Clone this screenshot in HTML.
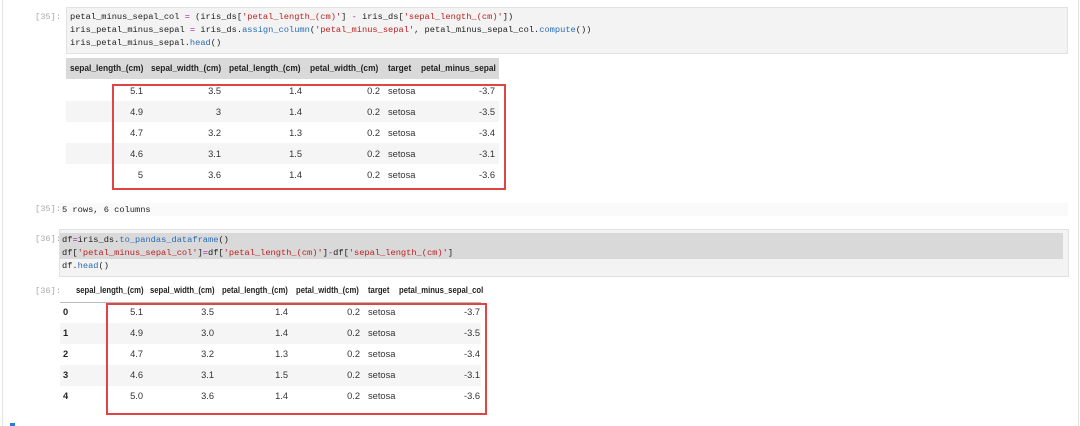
<!DOCTYPE html>
<html><head><style>
body{margin:0;width:1080px;height:426px;background:#fff;position:relative;overflow:hidden;font-family:"Liberation Sans",sans-serif;}
.a{position:absolute;}
.mono{font-family:"Liberation Mono",monospace;font-size:8.7px;color:#222;white-space:pre;line-height:13px;}
.pr{font-family:"Liberation Mono",monospace;font-size:8.7px;color:#aaa;}
.s{color:#b22;} .f{color:#2a6cb5;} .o{color:#a2a;}
.t{font-size:9.3px;color:#333;white-space:nowrap;}
.b{font-size:9.5px;font-weight:bold;color:#222;transform:scaleX(0.88);transform-origin:0 0;}
.b2{transform:scaleX(0.81);}
.ix{font-weight:bold;color:#222;}
</style></head><body>
<div class="a" style="left:2px;top:0;width:1px;height:426px;background:#e4e4e4"></div>
<div class="a" style="left:1078px;top:0;width:1px;height:426px;background:#e4e4e4"></div>

<div class="a pr" style="left:35px;top:12px">[35]:</div>
<div class="a" style="left:66px;top:7px;width:1000px;height:45px;background:#f3f3f3;border:1px solid #e2e2e2"></div>
<div class="a mono" style="left:70px;top:11px">petal_minus_sepal_col <span class="o">=</span> (iris_ds[<span class="s">'petal_length_(cm)'</span>] <span class="o">-</span> iris_ds[<span class="s">'sepal_length_(cm)'</span>])
iris_petal_minus_sepal <span class="o">=</span> iris_ds.<span class="f">assign_column</span>(<span class="s">'petal_minus_sepal'</span>, petal_minus_sepal_col.<span class="f">compute</span>())
iris_petal_minus_sepal.<span class="f">head</span>()</div>

<div class="a" style="left:66px;top:58px;width:433px;height:21px;background:#d9d9d9"></div>
<div class="a" style="left:66px;top:101px;width:433px;height:21px;background:#f5f5f5"></div>
<div class="a" style="left:66px;top:143px;width:433px;height:21px;background:#f5f5f5"></div>
<div class="a t b" style="left:70px;top:63px">sepal_length_(cm)</div>
<div class="a t b" style="left:151px;top:63px">sepal_width_(cm)</div>
<div class="a t b" style="left:229px;top:63px">petal_length_(cm)</div>
<div class="a t b" style="left:310px;top:63px">petal_width_(cm)</div>
<div class="a t b" style="left:388px;top:63px">target</div>
<div class="a t b" style="left:421px;top:63px">petal_minus_sepal</div>
<div id="t1"></div>
<div class="a" style="left:112px;top:84px;width:390px;height:102px;border:2px solid #e04545"></div>

<div class="a" style="left:60px;top:203px;width:1008px;height:13px;background:#fafafa"></div>
<div class="a pr" style="left:35px;top:204px">[35]:</div>
<div class="a mono" style="left:62px;top:204px">5 rows, 6 columns</div>

<div class="a pr" style="left:35px;top:234px">[36]:</div>
<div class="a" style="left:59px;top:229px;width:1008px;height:46px;background:#f3f3f3;border:1px solid #e2e2e2"></div>
<div class="a" style="left:60px;top:233px;width:1003px;height:26px;background:#d9d9d9"></div>
<div class="a mono" style="left:62px;top:234px">df<span class="o">=</span>iris_ds.<span class="f">to_pandas_dataframe</span>()
df[<span class="s">'petal_minus_sepal_col'</span>]<span class="o">=</span>df[<span class="s">'petal_length_(cm)'</span>]<span class="o">-</span>df[<span class="s">'sepal_length_(cm)'</span>]
df.<span class="f">head</span>()</div>

<div class="a pr" style="left:35px;top:286px">[36]:</div>
<div class="a t b b2" style="left:76px;top:285px">sepal_length_(cm)</div>
<div class="a t b b2" style="left:150px;top:285px">sepal_width_(cm)</div>
<div class="a t b b2" style="left:222px;top:285px">petal_length_(cm)</div>
<div class="a t b b2" style="left:296px;top:285px">petal_width_(cm)</div>
<div class="a t b b2" style="left:368px;top:285px">target</div>
<div class="a t b b2" style="left:399px;top:285px">petal_minus_sepal_col</div>
<div class="a" style="left:60px;top:302px;width:421px;height:1px;background:#bbb"></div>
<div class="a" style="left:60px;top:323px;width:421px;height:21px;background:#f5f5f5"></div>
<div class="a" style="left:60px;top:365px;width:421px;height:21px;background:#f5f5f5"></div>
<div id="t2"></div>
<div class="a" style="left:106px;top:303px;width:377px;height:108px;border:2px solid #e04545"></div>
<div class="a" style="left:10px;top:423px;width:5px;height:3px;background:#2a7be0"></div>

<script>
var d1=[["5.1","3.5","1.4","0.2","-3.7"],["4.9","3","1.4","0.2","-3.5"],["4.7","3.2","1.3","0.2","-3.4"],["4.6","3.1","1.5","0.2","-3.1"],["5","3.6","1.4","0.2","-3.6"]];
var d2=[["5.1","3.5","1.4","0.2","-3.7"],["4.9","3.0","1.4","0.2","-3.5"],["4.7","3.2","1.3","0.2","-3.4"],["4.6","3.1","1.5","0.2","-3.1"],["5.0","3.6","1.4","0.2","-3.6"]];
function mk(id,d,top,rights,tl,idx){var h="";for(var i=0;i<5;i++){var y=top+i*21;var r=d[i];
for(var j=0;j<4;j++)h+='<div class="a t" style="right:'+(1080-rights[j])+'px;top:'+y+'px">'+r[j]+'</div>';
h+='<div class="a t" style="left:'+tl+'px;top:'+y+'px">setosa</div>';
h+='<div class="a t" style="right:'+(1080-rights[4])+'px;top:'+y+'px">'+r[4]+'</div>';
if(idx)h+='<div class="a t ix" style="left:63px;top:'+y+'px">'+i+'</div>';}
document.getElementById(id).outerHTML=h;}
mk("t1",d1,86,[143,221,302,380,495],388,false);
mk("t2",d2,307,[143,214,288,360,480],368,true);
</script>
</body></html>
